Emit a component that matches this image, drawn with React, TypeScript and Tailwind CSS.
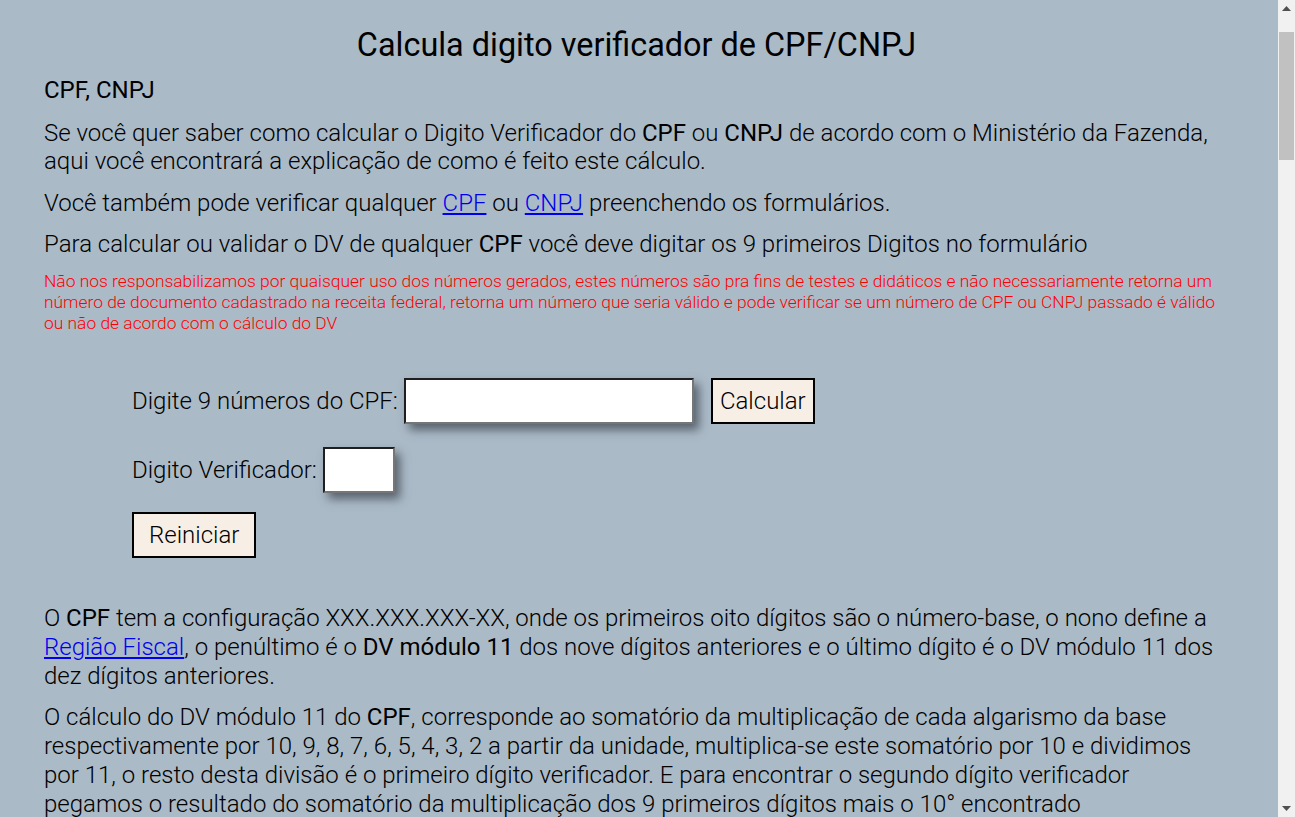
import React from "react";

const linkCls = "text-[#0000ee] underline";
const inputCls =
  "ml-[6px] h-[46px] bg-white border-2 border-t-[#1f1f1f] border-l-[#1f1f1f] border-b-[#767676] border-r-[#767676] shadow-[5px_6px_9px_rgba(60,70,80,0.75)] outline-none";

function Scrollbar() {
  return (
    <div className="fixed right-0 top-0 h-screen w-[17px] bg-[#f1f1f1] flex flex-col items-center">
      <div className="h-[17px] w-full flex items-center justify-center">
        <svg width="9" height="5" viewBox="0 0 9 5">
          <path d="M0 5 L4.5 0 L9 5 Z" fill="#505050" />
        </svg>
      </div>
      <div className="mt-[15px] h-[128px] w-[15px] bg-[#c1c1c1]" />
      <div className="flex-1" />
      <div className="h-[17px] w-full flex items-center justify-center">
        <svg width="9" height="5" viewBox="0 0 9 5">
          <path d="M0 0 L4.5 5 L9 0 Z" fill="#505050" />
        </svg>
      </div>
    </div>
  );
}

export default function App() {
  return (
    <div
      className="min-h-screen bg-[#abbac7] pl-[44px] pr-[66px] pt-[26px] pb-[40px] text-black font-light"
      style={{ fontFamily: "Roboto, 'Noto Sans', sans-serif" }}
    >
      <h1 className="text-center text-[32.4px] leading-[38px] font-normal mb-[12px]">
        Calcula digito verificador de CPF/CNPJ
      </h1>
      <p className="text-[24px] leading-[29px] font-normal mb-[14px]">CPF, CNPJ</p>
      <p className="text-[24px] leading-[28px] mb-[14px]">
        Se você quer saber como calcular o Digito Verificador do <b className="font-normal">CPF</b> ou{" "}
        <b className="font-normal">CNPJ</b> de acordo com o Ministério da Fazenda, aqui você encontrará a
        explicação de como é feito este cálculo.
      </p>
      <p className="text-[24px] leading-[29px] mb-[12px]">
        Você também pode verificar qualquer <a className={linkCls}>CPF</a> ou{" "}
        <a className={linkCls}>CNPJ</a> preenchendo os formulários.
      </p>
      <p className="text-[24px] leading-[29px] mb-[12px]">
        Para calcular ou validar o DV de qualquer <b className="font-normal">CPF</b> você deve digitar os 9
        primeiros Digitos no formulário
      </p>
      <p className="text-[17.4px] leading-[21px] text-[#ff0000]">
        Não nos responsabilizamos por quaisquer uso dos números gerados, estes números são pra fins de testes e
        didáticos e não necessariamente retorna um número de documento cadastrado na receita federal, retorna um
        número que seria válido e pode verificar se um número de CPF ou CNPJ passado é válido ou não de acordo com o
        cálculo do DV
      </p>

      <div className="ml-[88px] mt-[44px] flex flex-col items-start text-[24px] leading-[29px]">
        <div className="flex items-center h-[46px]">
          <span>Digite 9 números do CPF:</span>
          <input type="text" className={inputCls + " w-[290px]"} />
          <button className="ml-[17px] h-[46px] px-[7px] bg-[#f7efe6] border-2 border-black font-light">
            Calcular
          </button>
        </div>
        <div className="flex items-center h-[46px] mt-[23px]">
          <span>Digito Verificador:</span>
          <input type="text" className={inputCls + " w-[72px]"} />
        </div>
        <button className="mt-[19px] h-[46px] px-[15px] bg-[#f7efe6] border-2 border-black font-light">
          Reiniciar
        </button>
      </div>

      <p className="text-[24px] leading-[29px] mt-[46px] mb-[12px]">
        O <b className="font-normal">CPF</b> tem a configuração XXX.XXX.XXX-XX, onde os primeiros oito dígitos são o
        número-base, o nono define a <a className={linkCls}>Região Fiscal</a>, o penúltimo é o{" "}
        <b className="font-normal">DV módulo 11</b> dos nove dígitos anteriores e o último dígito é o DV módulo 11
        dos dez dígitos anteriores.
      </p>
      <p className="text-[24px] leading-[29px] mb-[12px]">
        O cálculo do DV módulo 11 do <b className="font-normal">CPF</b>, corresponde ao somatório da multiplicação de
        cada algarismo da base respectivamente por 10, 9, 8, 7, 6, 5, 4, 3, 2 a partir da unidade, multiplica-se
        este somatório por 10 e dividimos por 11, o resto desta divisão é o primeiro dígito verificador. E para
        encontrar o segundo dígito verificador pegamos o resultado do somatório da multiplicação dos 9 primeiros
        dígitos mais o 10° encontrado respectivamente por 11, 10, 9, 8, 7, 6, 5, 4, 3, 2, multiplica-se este
        somatório por 10 e dividimos por 11, o resto desta divisão é o segundo dígito verificador.
      </p>
      <p className="text-[24px] leading-[29px] mb-[12px]">
        Quando o resto da divisão for igual a 10, o dígito verificador será 0 (zero).
      </p>
      <Scrollbar />
    </div>
  );
}
